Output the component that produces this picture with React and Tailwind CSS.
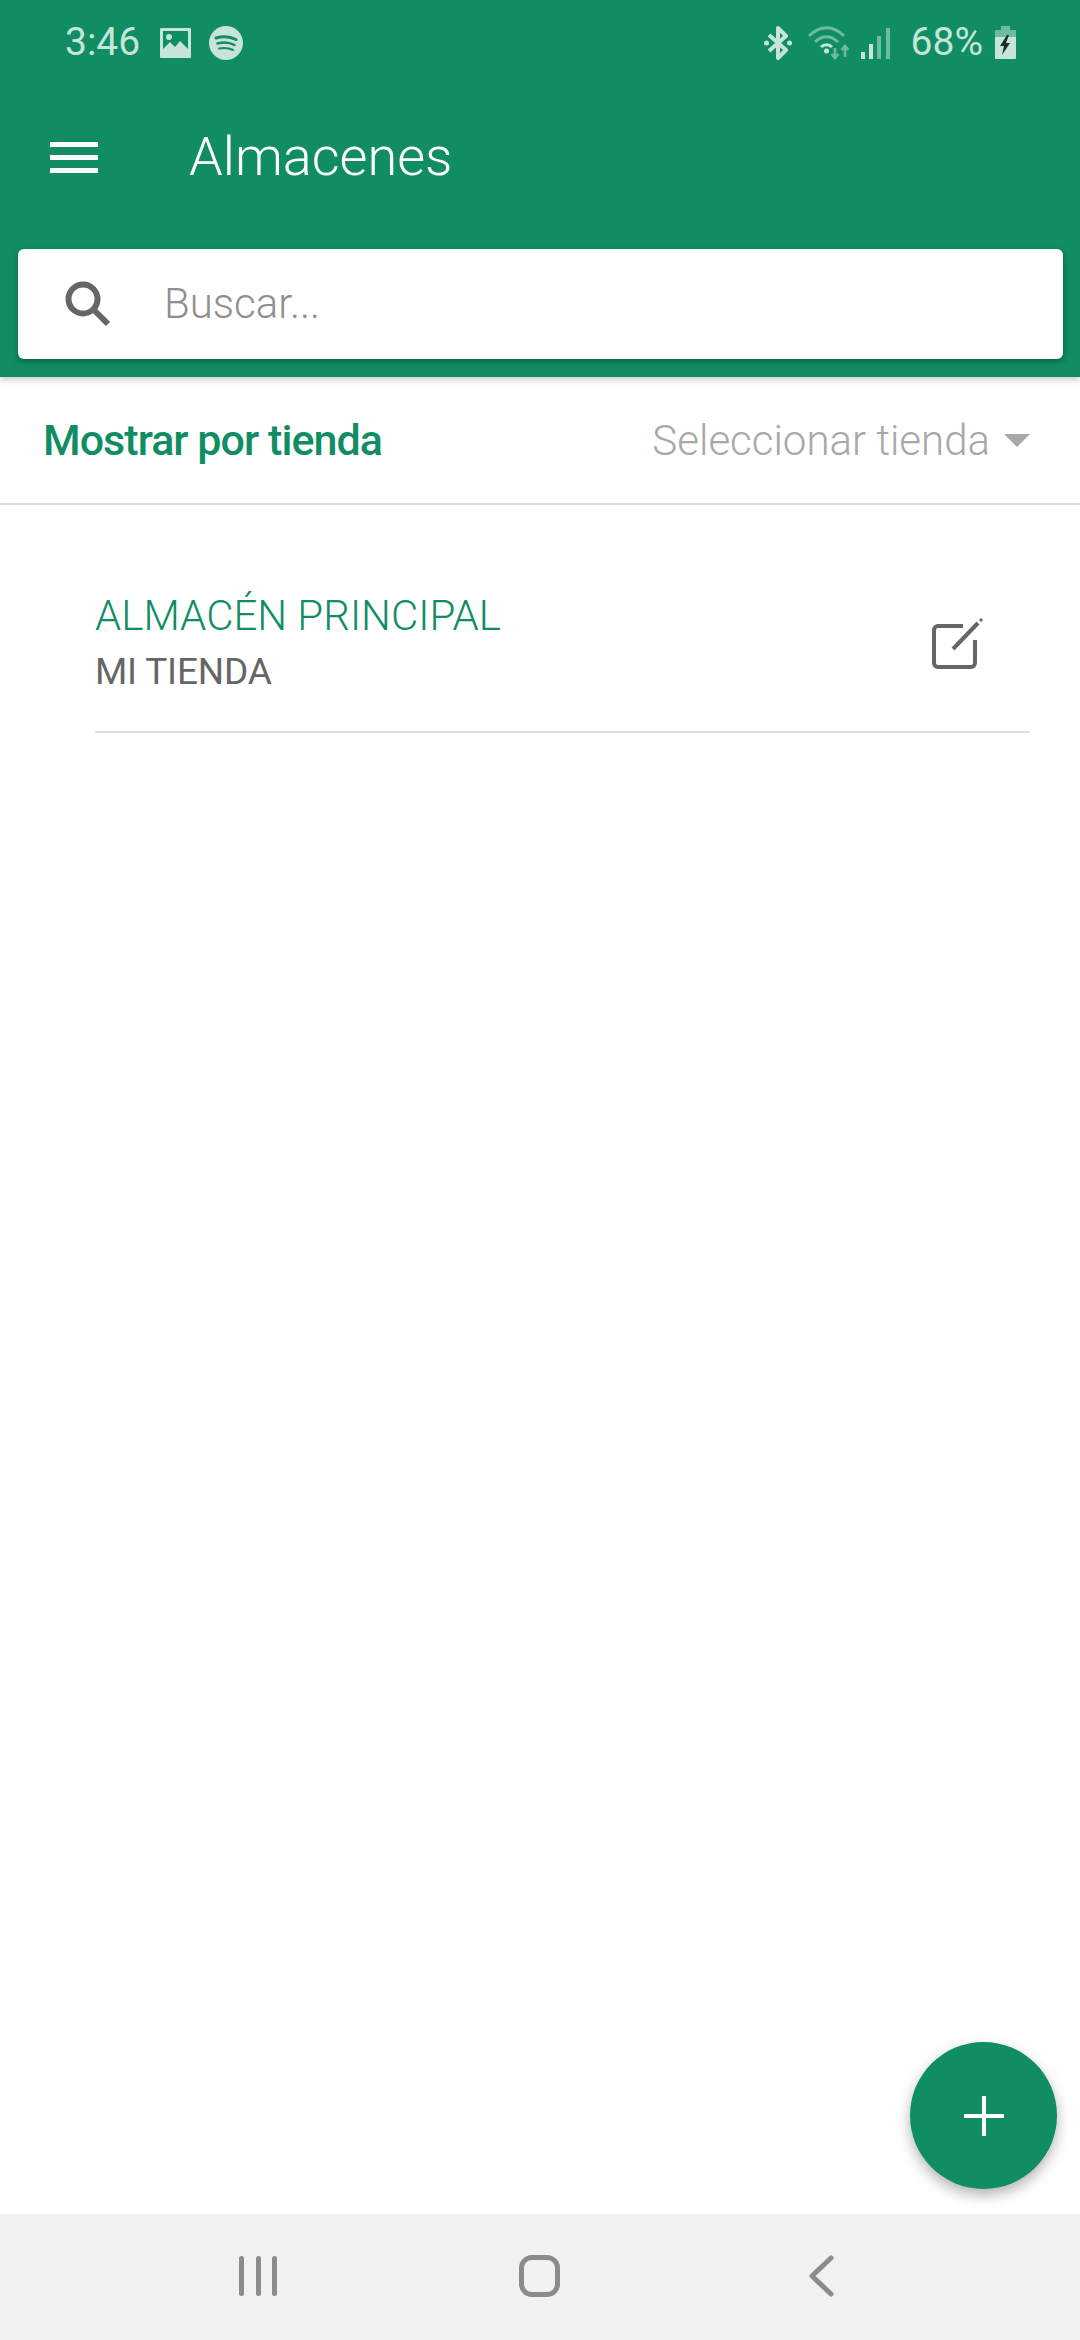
import React from "react";

const GREEN = "#108d63";

function StatusBar() {
  return (
    <div className="flex h-[83px] items-center pl-[65px] pr-[64px] pt-[2px] text-[#c6e4d9]">
      <span className="w-[76px] text-[39px] leading-none">3:46</span>
      {/* gallery */}
      <svg width="31" height="30" viewBox="0 0 31 30" className="ml-[19px]">
        <path
          fillRule="evenodd"
          fill="#c6e4d9"
          d="M1 0h29a1 1 0 0 1 1 1v28a1 1 0 0 1-1 1H1a1 1 0 0 1-1-1V1a1 1 0 0 1 1-1zM3 3v18l7-7 5 5 5-6 8 8V3z"
        />
        <circle cx="9" cy="9" r="3" fill="#c6e4d9" />
      </svg>
      {/* spotify */}
      <svg width="34" height="34" viewBox="0 0 34 34" className="ml-[18px]">
        <circle cx="17" cy="17" r="17" fill="#c6e4d9" />
        <path d="M7 12c7-2 14-1.500 20 1.500" stroke={GREEN} strokeWidth="3" strokeLinecap="round" fill="none" />
        <path d="M8.500 17.500c6-1.500 12-1 17 1.500" stroke={GREEN} strokeWidth="2.500" strokeLinecap="round" fill="none" />
        <path d="M10 22.500c5-1 10-.5 14 1.500" stroke={GREEN} strokeWidth="2" strokeLinecap="round" fill="none" />
      </svg>

      <div className="ml-auto flex items-center">
        {/* bluetooth */}
        <svg width="28" height="34" viewBox="0 0 28 34">
          <path d="M5 9l17 15-8 8V2l8 8L5 25" fill="none" stroke="#c6e4d9" strokeWidth="4" strokeLinejoin="round" />
          <circle cx="2.500" cy="17" r="2.500" fill="#c6e4d9" />
          <circle cx="25.500" cy="17" r="2.500" fill="#c6e4d9" />
        </svg>
        {/* wifi with arrows */}
        <svg width="42" height="34" viewBox="0 0 42 34" className="ml-[16px]">
          <path d="M1 10c11-11 24-11 35 0" fill="none" stroke="#6fbb9f" strokeWidth="3" />
          <path d="M7 16c7-7 16-7 23 0" fill="none" stroke="#6fbb9f" strokeWidth="3" />
          <path d="M13 21c3-3 8-3 11 0" fill="none" stroke="#c6e4d9" strokeWidth="3" />
          <circle cx="18.500" cy="25" r="2.500" fill="#c6e4d9" />
          <path d="M27 22v9M23.500 28l3.500 4 3.500-4" fill="none" stroke="#6fbb9f" strokeWidth="2.500" />
          <path d="M37 31v-11M33.500 24l3.500-4 3.500 4" fill="none" stroke="#6fbb9f" strokeWidth="2.500" />
        </svg>
        {/* signal */}
        <svg width="29" height="32" viewBox="0 0 29 32" className="ml-[11px]">
          <rect x="0" y="25" width="4" height="7" fill="#c6e4d9" />
          <rect x="8" y="17" width="4" height="15" fill="#c6e4d9" />
          <rect x="16" y="9" width="4" height="23" fill="#6fbb9f" />
          <rect x="25" y="1" width="4" height="31" fill="#6fbb9f" />
        </svg>
        <span className="ml-[21px] text-[39px] leading-none">68%</span>
        {/* battery */}
        <svg width="21" height="33" viewBox="0 0 21 33" className="ml-[12px]">
          <path d="M6 0h9v4h5a1 1 0 0 1 1 1v7H0V5a1 1 0 0 1 1-1h5z" fill="#6fbb9f" />
          <path d="M0 11h21v21a1 1 0 0 1-1 1H1a1 1 0 0 1-1-1z" fill="#c6e4d9" />
          <path d="M12 9l-7 11h4l-2 9 8-12h-4l3-8z" fill="#16302a" />
        </svg>
      </div>
    </div>
  );
}

function Header() {
  return (
    <div className="relative h-[377px] bg-[#108d63] shadow-[0_3px_6px_rgba(0,0,0,0.2)]">
      <StatusBar />
      <div className="mt-[34px] flex h-[80px] items-center pl-[50px]">
        <div className="flex w-[48px] flex-col gap-[8px]">
          <div className="h-[5px] bg-white" />
          <div className="h-[5px] bg-white" />
          <div className="h-[5px] bg-white" />
        </div>
        <span className="ml-[91px] text-[54px] font-light leading-none text-white">Almacenes</span>
      </div>
      <div className="ml-[18px] mr-[17px] mt-[52px] flex h-[110px] items-center rounded-[6px] bg-white pl-[47px] shadow-[0_3px_6px_rgba(0,0,0,0.3)]">
        <svg width="46" height="46" viewBox="0 0 46 46">
          <circle cx="18" cy="18" r="14.500" fill="none" stroke="#666666" strokeWidth="6" />
          <path d="M28 28l15 15" stroke="#666666" strokeWidth="6" />
        </svg>
        <span className="ml-[53px] text-[42px] font-light leading-none text-[#8f8f8f]">Buscar...</span>
      </div>
    </div>
  );
}

export default function App() {
  return (
    <div
      className="relative flex h-[2340px] w-[1080px] flex-col overflow-hidden bg-white"
      style={{ fontFamily: "Roboto, sans-serif" }}
    >
      <Header />

      {/* filter row */}
      <div className="flex h-[128px] items-center justify-between border-b-2 border-[#dedede] pl-[43px] pr-[50px]">
        <span className="text-[43px] font-medium tracking-[-0.95px] text-[#108d63]">Mostrar por tienda</span>
        <div className="flex items-center">
          <span className="text-[42px] font-light text-[#a8a8a8]">Seleccionar tienda</span>
          <div className="ml-[14px] h-0 w-0 border-x-[13px] border-t-[13px] border-x-transparent border-t-[#a8a8a8]" />
        </div>
      </div>

      {/* warehouse item */}
      <div className="ml-[95px] mr-[50px] flex h-[228px] items-center justify-between border-b-2 border-[#dedede] pr-[47px]">
        <div className="mt-[52px]">
          <div className="text-[42px] font-light leading-[56px] text-[#108d63]">ALMACÉN PRINCIPAL</div>
          <div className="text-[37px] leading-[56px] tracking-[-0.2px] text-[#666666]">MI TIENDA</div>
        </div>
        <svg width="52" height="52" viewBox="0 0 52 52" className="mt-[52px]">
          <path
            d="M32 8H7a4 4 0 0 0-4 4v33a4 4 0 0 0 4 4h33a4 4 0 0 0 4-4V22"
            fill="none"
            stroke="#666666"
            strokeWidth="4"
          />
          <path d="M22 31L47 5" stroke="#666666" strokeWidth="4" />
          <path d="M49 3l2-2" stroke="#666666" strokeWidth="3" />
        </svg>
      </div>

      <div className="flex-1" />

      {/* nav bar */}
      <div className="flex h-[126px] items-center bg-[#f1f1f1] pb-[2px]">
        <div className="ml-[239px] flex h-[40px] w-[38px] justify-between">
          <div className="w-[5px] rounded-full bg-[#8b8b8b]" />
          <div className="w-[5px] rounded-full bg-[#8b8b8b]" />
          <div className="w-[5px] rounded-full bg-[#8b8b8b]" />
        </div>
        <div className="ml-[242px] h-[42px] w-[41px] rounded-[13px] border-[5px] border-[#8b8b8b]" />
        <svg width="26" height="42" viewBox="0 0 26 42" className="ml-[248px]">
          <path d="M23 3L4 21l19 18" fill="none" stroke="#8b8b8b" strokeWidth="5" strokeLinecap="round" strokeLinejoin="round" />
        </svg>
      </div>

      {/* fab */}
      <button className="absolute bottom-[151px] right-[23px] flex h-[147px] w-[147px] items-center justify-center rounded-full bg-[#108d63] shadow-[0_6px_14px_rgba(0,0,0,0.3)]">
        <svg width="40" height="40" viewBox="0 0 40 40">
          <path d="M20 0v40M0 20h40" stroke="#ffffff" strokeWidth="4" strokeLinecap="round" />
        </svg>
      </button>
    </div>
  );
}
